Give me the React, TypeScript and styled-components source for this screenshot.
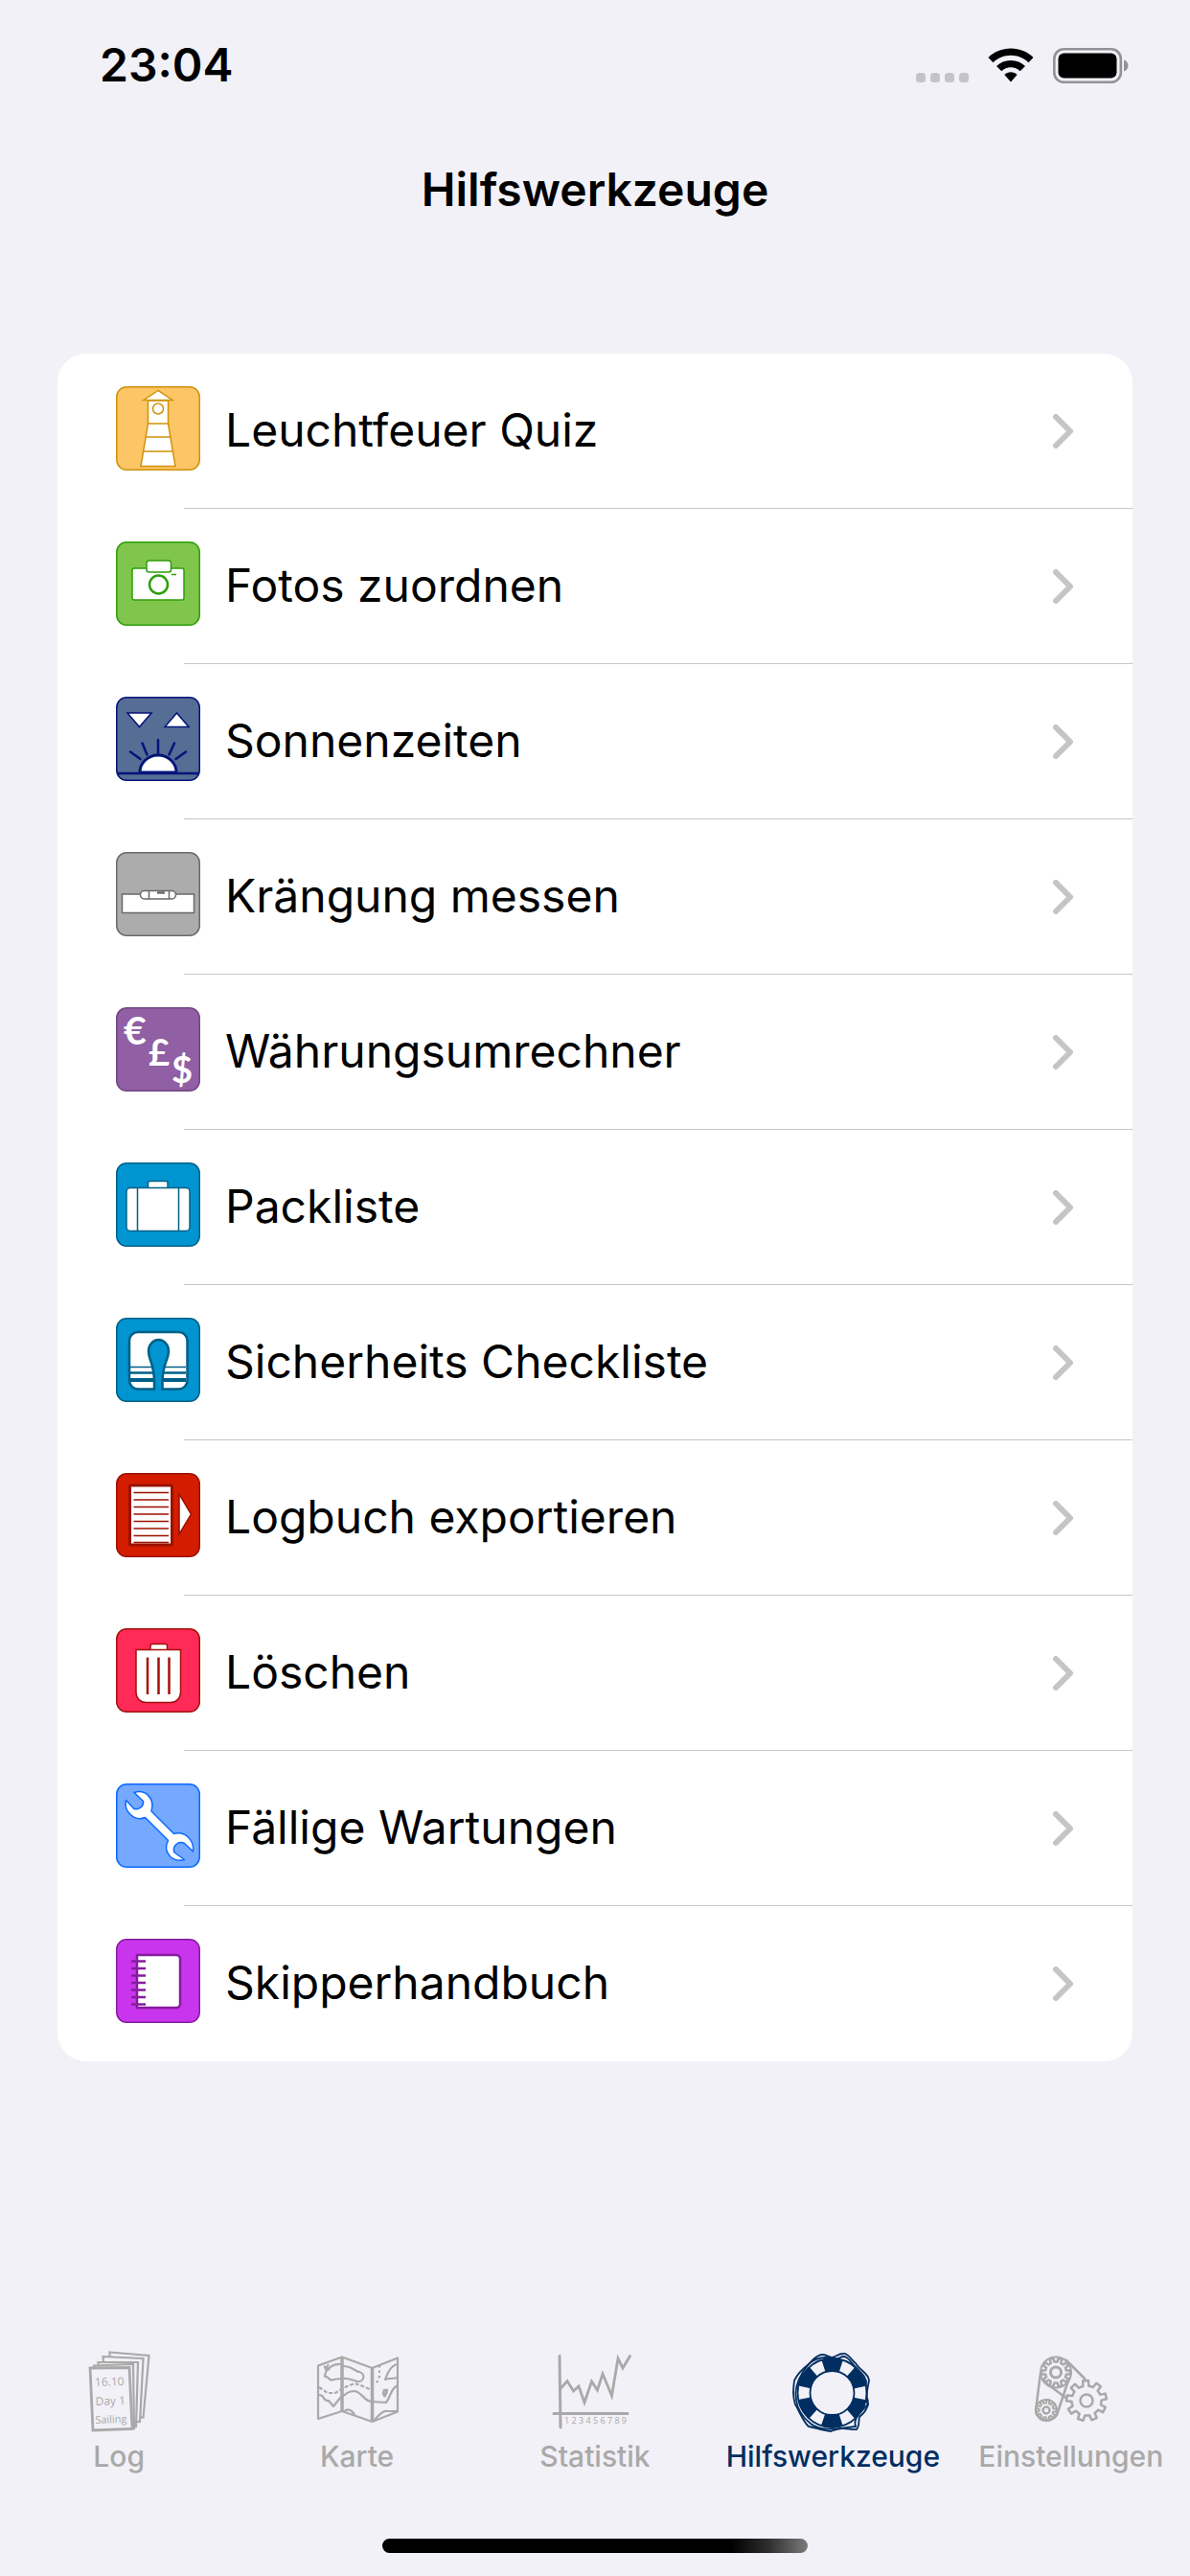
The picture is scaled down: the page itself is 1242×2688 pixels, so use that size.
import React from "react";
import styled, { createGlobalStyle } from "styled-components";

const GlobalStyle = createGlobalStyle`
  * { box-sizing: border-box; }
  body {
    margin: 0;
    background: #f2f1f7;
    color: #000;
    font-family: Inter, Roboto, "Liberation Sans", sans-serif;
  }
`;

const Screen = styled.div`
  min-height: 100vh;
  display: flex;
  flex-direction: column;
`;

const StatusBar = styled.div`
  height: 132px;
  padding: 4px 64px 0 104px;
  display: flex;
  align-items: center;
  justify-content: space-between;
`;

const Time = styled.time`
  font-size: 48px;
  line-height: 56px;
  font-weight: 600;
`;

const StatusIcons = styled.div`
  display: flex;
  align-items: center;
  gap: 20px;
`;

const Header = styled.header`
  height: 132px;
  display: flex;
  align-items: center;
  justify-content: center;
`;

const Title = styled.h1`
  margin: 0;
  font-size: 48px;
  line-height: 60px;
  font-weight: 600;
`;

const Main = styled.main`
  flex: 1;
  padding: 105px 60px 0;
`;

const List = styled.ul`
  margin: 0;
  padding: 0;
  list-style: none;
  background: #fff;
  border-radius: 30px;
  overflow: hidden;
`;

const Item = styled.li`
  & + &::before {
    content: "";
    display: block;
    height: 1px;
    margin: -1px 0 0 132px;
    background: #c6c6c8;
  }
`;

const Row = styled.button`
  width: 100%;
  height: 162px;
  padding: 0 61px 6px;
  display: flex;
  align-items: center;
  gap: 26px;
  border: 0;
  background: none;
  color: inherit;
  font: inherit;
  font-size: 48px;
  line-height: 60px;
  text-align: left;
  cursor: pointer;
`;

const RowLabel = styled.span`
  flex: 1;
  padding-top: 4px;
`;

const Chevron = styled.svg`
  width: 22px;
  height: 36px;
  margin-top: 6px;
`;

const TabBar = styled.nav`
  height: 191px;
  display: grid;
  grid-template-columns: repeat(5, 1fr);
`;

const Tab = styled.a<{ $active?: boolean }>`
  display: flex;
  flex-direction: column;
  align-items: center;
  color: ${(p) => (p.$active ? "#002e61" : "#a9a9a9")};
  font-size: 30px;
  line-height: 36px;
  font-weight: 500;
  text-decoration: none;
  white-space: nowrap;
`;

const TabIcon = styled.svg`
  width: 90px;
  height: 90px;
  margin-bottom: 6px;
`;

const HomeArea = styled.div`
  height: 48px;
  display: flex;
  justify-content: center;
  align-items: flex-start;
  padding-top: 9px;
`;

const HomeIndicator = styled.div`
  width: 444px;
  height: 15px;
  border-radius: 8px;
  background: linear-gradient(90deg, #000 82%, #303030 91%, #7c7c7e);
`;

const Glyph = styled.svg`
  width: 88px;
  height: 88px;
  flex: none;
  overflow: visible;
`;

type TileProps = { fill: string; line: string; children: React.ReactNode };

function Tile({ fill, line, children }: TileProps) {
  return (
    <Glyph viewBox="0 0 88 88" aria-hidden="true" fill="#fff" stroke={line} strokeWidth="1.5">
      <rect x="0.75" y="0.75" width="86.5" height="86.5" rx="10.5" fill={fill} />
      {children}
    </Glyph>
  );
}

const Lighthouse = () => (
  <Tile fill="#fcc566" line="#d09209">
    <path d="M33.500 15v24L26 83.500h36L54.500 39V15z" />
    <path d="M44 4.500L29 14.500h30z" />
    <circle cx="44" cy="23.500" r="5.500" />
    <path d="M33 39h22M31 53h26M28.500 68h31" />
  </Tile>
);

const Camera = () => (
  <Tile fill="#80c64c" line="#2f9e08">
    <rect x="17" y="28" width="54" height="33" rx="2" />
    <rect x="32" y="20" width="25.500" height="12" rx="2.500" />
    <circle cx="44.500" cy="45" r="9.500" strokeWidth="2.500" />
    <path d="M58 34.500h5" />
  </Tile>
);

const Sun = () => (
  <Tile fill="#566d95" line="#03147a">
    <path d="M12 17h25L24.500 31.500zM51 31.500h25L63.500 17z" />
    <path d="M25 79a19 18 0 0 1 38 0z" strokeWidth="3" />
    <path d="M1.500 80h85" strokeWidth="2.500" />
    <path d="M15 57.500l10.500 7.500M27.500 48.500l5 12M44 45v14M61 48.500l-5.500 12M73 57.500L62.500 65" strokeWidth="2.500" strokeLinecap="round" />
  </Tile>
);

const Level = () => (
  <Tile fill="#acacac" line="#6a6a6a">
    <rect x="6.500" y="44" width="75" height="19.500" />
    <rect x="25.500" y="40.500" width="37" height="8.500" rx="4.200" />
    <path d="M34.500 41v8M55.500 41v8" />
    <path d="M43 42.500h8" strokeWidth="2.500" />
  </Tile>
);

const Currency = () => (
  <Tile fill="#905fa4" line="#714780">
    <g fill="#fff" stroke="none" fontFamily="Lato, 'Open Sans', sans-serif" fontWeight="700">
      <text x="8" y="39" fontSize="41">€</text>
      <text x="34" y="61" fontSize="38">£</text>
      <text x="58" y="79" fontSize="38">$</text>
    </g>
  </Tile>
);

const Suitcase = () => (
  <Tile fill="#0095d0" line="#006189">
    <path d="M33.500 26.500v-5a2 2 0 0 1 2-2h16.500a2 2 0 0 1 2 2v5" />
    <rect x="11" y="26.500" width="66" height="45" rx="4" />
    <path d="M22.500 26.500v45M65.500 26.500v45" />
  </Tile>
);

const LifeVest = () => (
  <Tile fill="#0095d0" line="#005f87">
    <rect x="14" y="15" width="60.500" height="59.500" rx="9" strokeWidth="2.500" />
    <path d="M15 51.500h58" />
    <path d="M15 57.500h58" strokeWidth="2.500" />
    <path d="M15 65h58" strokeWidth="4" />
    <path d="M40 76V67C40 48 34 44 34 35a10.500 12 0 0 1 21 0C55 44 48.500 48 48.500 67V76" fill="#0095d0" strokeWidth="2.500" />
    <path d="M41.200 75.500h6.200" stroke="#0095d0" strokeWidth="4" />
  </Tile>
);

const Export = () => (
  <Tile fill="#d41d00" line="#9b1200">
    <rect x="14.500" y="13" width="44" height="62" rx="1" strokeWidth="3" />
    <path d="M18.500 20.500h36.500M18.500 28h36.500M18.500 35.500h36.500M18.500 43h36.500M18.500 50.500h36.500M18.500 58h36.500M18.500 65.500h36.500M18.500 72.500h36.500" />
    <path d="M66 22v42L78.500 43z" />
  </Tile>
);

const Trash = () => (
  <Tile fill="#ff2a58" line="#a31109">
    <path d="M36 22.500v-4a2 2 0 0 1 2-2h13.500a2 2 0 0 1 2 2v4" />
    <path d="M21 22.500h46.500V67a10.500 10.500 0 0 1-10.500 10.500H31.500A10.500 10.500 0 0 1 21 67z" />
    <path d="M33 30.500v38.500M44.500 30.500v38.500M55.500 30.500v38.500" strokeWidth="2.500" />
  </Tile>
);

const Wrench = () => (
  <Tile fill="#74a9ff" line="#0b6aff">
    <path
      d="M19 9.500C31 5.500 41 16 37 29L60.500 52.500C71 49.500 82 58 80.500 71L71.500 62.500A7.500 7.500 0 0 0 61 72L71.500 79.500C58 83 48.500 71 54.500 59.500L30.500 35.500C19 40 8 29 10.500 17.500L19 26.500A7.500 7.500 0 0 0 28.500 18.500z"
      strokeLinejoin="round"
    />
  </Tile>
);

const Handbook = () => (
  <Tile fill="#c935ed" line="#861c9f">
    <path d="M22 17h41a4 4 0 0 1 4 4v47a4 4 0 0 1-4 4H22z" strokeWidth="2.500" />
    <path d="M16 23.500h15M16 31h15M16 38.500h15M16 46h15M16 53.500h15M16 61h15M16 68.500h15" strokeWidth="2.500" />
  </Tile>
);

/* Builds the outline of a cog wheel with evenly spaced teeth. */
function cog(cx: number, cy: number, outer: number, inner: number, teeth: number, turn = 0) {
  const step = (Math.PI * 2) / teeth;
  const at = (r: number, a: number) =>
    `${(cx + r * Math.cos(a)).toFixed(2)} ${(cy + r * Math.sin(a)).toFixed(2)}`;
  let d = "";
  for (let i = 0; i < teeth; i++) {
    const a = i * step + turn;
    d += `${i ? "L" : "M"}${at(inner, a - step * 0.28)}L${at(outer, a - step * 0.2)}L${at(outer, a + step * 0.2)}L${at(inner, a + step * 0.28)}A${inner} ${inner} 0 0 1 ${at(inner, a + step * 0.72)}`;
  }
  return d + "Z";
}

const LogIcon = () => (
  <TabIcon viewBox="0 0 90 90" fill="#f2f1f7" stroke="currentColor" strokeWidth="2.200" aria-hidden="true">
    <path d="M35.500 5.500L76.500 9L70.500 73.500L35 70z" />
    <path d="M28.500 10L70.500 12L67 78L33 76z" />
    <path d="M23.500 16L65 16L63 83L30 80z" />
    <path d="M19 19.500L60 18L61 85L24 84z" />
    <path d="M15 22L56 21.500L59 85.500L18 87z" strokeWidth="2.800" />
    <g fill="currentColor" stroke="none" fontFamily="'Open Sans', 'Noto Sans', sans-serif" fontSize="12" transform="rotate(-2 20 40)">
      <text x="20" y="41">16.10</text>
      <text x="20" y="61">Day 1</text>
      <text x="19" y="80" fontSize="11">Sailing</text>
    </g>
  </TabIcon>
);

const MapIcon = () => (
  <TabIcon viewBox="0 0 90 90" fill="none" stroke="currentColor" strokeWidth="2.200" strokeLinejoin="round" aria-hidden="true">
    <path d="M4 19.500L29 10.500L60.500 22L87 11.500V67.500L60.500 78L29 67L4 75z" />
    <path d="M29 10.500V67M60.500 22V78" strokeWidth="3.500" />
    <path d="M28 18C20 17 11 23 11 31C16 30 15 37 20 34L28 33M30 20C40 20 43 26 47 26C54 28 52 37 45 36C39 35 36 32 30 33" />
    <path d="M10 20l6 4M15 18l-4 6" />
    <path d="M5 42l9 6 8 0 8-5 12-5 9 3 9 4" strokeDasharray="4 2" />
    <path d="M5 50C12 50 8 57 15 56L20 62L28 52C33 51 33 46 42 46C50 47 52 57 60 57L75 58C80 52 79 44 87 40" />
    <path d="M68 19v12l-4 9" strokeDasharray="2.500 3" />
    <path d="M86 18C79 20 76 28 74 34C78 32 81 34 86 32" />
    <path d="M73 45h3l-1 4h-3zM72 51h3" strokeWidth="2.500" />
    <path d="M31 68C34 63 40 66 42 71M63 76C68 70 73 66 76 67L87 67" />
  </TabIcon>
);

const ChartIcon = () => (
  <TabIcon viewBox="0 0 90 90" fill="none" stroke="currentColor" strokeWidth="2.800" strokeLinecap="round" aria-hidden="true">
    <path d="M8 9.500L9 84M2 69.500H79" strokeWidth="3" />
    <path d="M9.500 43L16 35.500L22.500 46L28 41L34 58L41.500 36L47.500 45L53 28L62.500 51L69 12L74 22L81.500 9.500" />
    <text x="13" y="80" fill="currentColor" stroke="none" fontFamily="'Open Sans', 'Liberation Sans', sans-serif" fontSize="9">
      1 2 3 4 5 6 7 8 9
    </text>
  </TabIcon>
);

const BuoyIcon = () => (
  <TabIcon viewBox="0 -2 90 90" fill="none" stroke="currentColor" strokeWidth="1.800" aria-hidden="true">
    <path d="M20 16C24 12 29 9 38 9C47 11 49 5 56 5C61 4 64 11 69 15C73 22 83 26 83 33C82 39 80 45 81 51C84 59 79 66 73 71C72 76 73 81 70 84C62 85 57 80 43 86C34 85 26 82 20 81C14 76 10 64 6 58C3 49 4 42 5 33C8 27 12 22 20 16z" />
    <path d="M14 24C20 16 27 6 35 6C40 6 46 13 53 9C60 5 64 14 69 19C75 25 81 30 80 37C77 45 79 53 82 58C75 65 66 72 69 81C55 82 34 88 22 78C12 70 8 62 7 53C5 44 8 34 14 24z" />
    <circle cx="44.500" cy="46" r="36" fill="#f2f1f7" />
    <circle cx="44.500" cy="46" r="29.500" strokeWidth="13" strokeDasharray="18.900 11.990" strokeDashoffset="9.450" transform="rotate(-90 44.500 46)" />
    <circle cx="44.500" cy="46" r="23" fill="#f2f1f7" />
  </TabIcon>
);

const GearsIcon = () => (
  <TabIcon viewBox="-4 0 90 90" fill="none" stroke="currentColor" strokeWidth="2.500" strokeLinejoin="round" aria-hidden="true">
    <path d="M9 27L4 66A12 12 0 0 0 26 71L39 32" />
    <path d="M35 13L56 34M14 37L42 58" />
    <circle cx="25" cy="26.500" r="16" strokeWidth="2" />
    <circle cx="15" cy="66" r="11" strokeWidth="2" />
    <path d={cog(25, 26.5, 15, 11, 10)} />
    <circle cx="25" cy="26.500" r="5.500" strokeWidth="3" />
    <path d={cog(15, 66, 11, 7.5, 9)} strokeWidth="2" />
    <circle cx="15" cy="66" r="3.500" />
    <path d={cog(57, 56, 21, 15.5, 9, -0.22)} fill="#f2f1f7" />
    <circle cx="57" cy="56" r="6.500" />
  </TabIcon>
);

const tools = [
  { label: "Leuchtfeuer Quiz", Icon: Lighthouse },
  { label: "Fotos zuordnen", Icon: Camera },
  { label: "Sonnenzeiten", Icon: Sun },
  { label: "Krängung messen", Icon: Level },
  { label: "Währungsumrechner", Icon: Currency },
  { label: "Packliste", Icon: Suitcase },
  { label: "Sicherheits Checkliste", Icon: LifeVest },
  { label: "Logbuch exportieren", Icon: Export },
  { label: "Löschen", Icon: Trash },
  { label: "Fällige Wartungen", Icon: Wrench },
  { label: "Skipperhandbuch", Icon: Handbook },
];

const tabs = [
  { label: "Log", Icon: LogIcon },
  { label: "Karte", Icon: MapIcon },
  { label: "Statistik", Icon: ChartIcon },
  { label: "Hilfswerkzeuge", Icon: BuoyIcon, active: true },
  { label: "Einstellungen", Icon: GearsIcon },
];

export default function App() {
  return (
    <Screen>
      <GlobalStyle />
      <StatusBar>
        <Time>23:04</Time>
        <StatusIcons>
          <svg width="55" height="37" viewBox="0 0 55 37" fill="#c3c3c8" aria-hidden="true">
            {[0, 15, 30, 45].map((x) => (
              <rect key={x} x={x} y="26" width="10" height="10" rx="3.500" />
            ))}
          </svg>
          <svg width="48" height="37" viewBox="0 0 48 37" aria-hidden="true">
            <path d="M24 0.500C33 0.500 41.500 4 47.500 10L42.500 15.200C37.500 10.500 31 7.800 24 7.800S10.500 10.500 5.500 15.200L0.500 10C6.500 4 15 0.500 24 0.500z" />
            <path d="M24 13C29.800 13 35 15.200 39 19L33.700 24.300C31 21.800 27.700 20.300 24 20.300S17 21.800 14.300 24.300L9 19C13 15.200 18.200 13 24 13z" />
            <path d="M24 25.300C26.500 25.300 28.900 26.300 30.600 28L24 35.500L17.400 28C19.100 26.300 21.500 25.300 24 25.300z" />
          </svg>
          <svg width="79" height="37" viewBox="0 0 79 37" aria-hidden="true">
            <rect x="1.300" y="1.300" width="69.500" height="34.500" rx="10" fill="none" stroke="#929196" strokeWidth="2.600" />
            <rect x="5.500" y="5.500" width="61" height="26" rx="6" />
            <path d="M74 12.500C77 13.500 78.500 16 78.500 18.500S77 23.500 74 24.500z" fill="#929196" />
          </svg>
        </StatusIcons>
      </StatusBar>
      <Header>
        <Title>Hilfswerkzeuge</Title>
      </Header>
      <Main>
        <List>
          {tools.map(({ label, Icon }) => (
            <Item key={label}>
              <Row type="button">
                <Icon />
                <RowLabel>{label}</RowLabel>
                <Chevron viewBox="0 0 22 36" fill="none" stroke="#c5c5c7" strokeWidth="6" strokeLinecap="round" strokeLinejoin="round" aria-hidden="true">
                  <path d="M3 3L18 18L3 33" />
                </Chevron>
              </Row>
            </Item>
          ))}
        </List>
      </Main>
      <TabBar>
        {tabs.map(({ label, Icon, active }) => (
          <Tab key={label} href="#" $active={active} aria-current={active ? "page" : undefined}>
            <Icon />
            {label}
          </Tab>
        ))}
      </TabBar>
      <HomeArea>
        <HomeIndicator />
      </HomeArea>
    </Screen>
  );
}
